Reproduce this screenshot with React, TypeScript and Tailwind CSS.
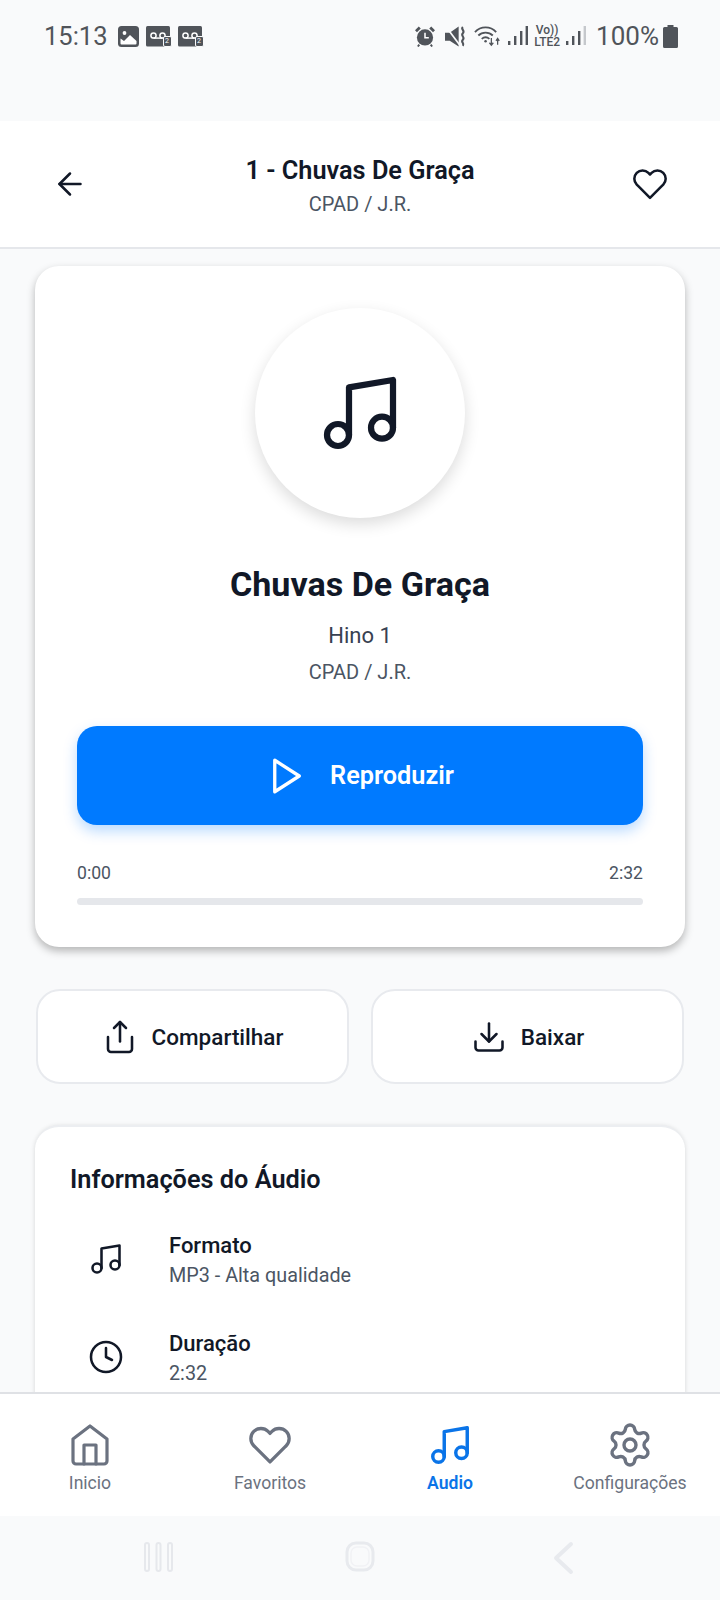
import React from "react";
import { ArrowLeft, Music, Share, Download, Clock, Settings } from "lucide-react";

const HEART =
  "M20.84 4.61a5.5 5.5 0 0 0-7.78 0L12 5.67l-1.06-1.06a5.5 5.5 0 0 0-7.78 7.78l1.06 1.06L12 21.23l7.78-7.78 1.06-1.06a5.5 5.5 0 0 0 0-7.78z";

function Heart({ size, color, sw }: { size: number; color: string; sw: number }) {
  return (
    <svg width={size} height={size} viewBox="0 0 24 24" fill="none" stroke={color} strokeWidth={sw} strokeLinecap="round" strokeLinejoin="round" className="block">
      <path d={HEART} />
    </svg>
  );
}

function Voicemail() {
  return (
    <span className="relative block w-[26px] h-[21px]">
      <svg width="24" height="21" viewBox="0 0 24 21" className="block">
        <rect width="24" height="20.5" rx="1.5" fill="#50545a" />
        <circle cx="7.5" cy="9.500" r="2.600" fill="none" stroke="#fff" strokeWidth="1.500" />
        <circle cx="16.500" cy="9.500" r="2.600" fill="none" stroke="#fff" strokeWidth="1.500" />
        <path d="M7.500 12.100h9" stroke="#fff" strokeWidth="1.500" />
      </svg>
      <span className="absolute right-0 bottom-0 w-[9px] h-[11px] bg-[#50545a] border border-[#f9fafb] rounded-[2px] text-white text-[7px] leading-[9px] text-center">
        2
      </span>
    </span>
  );
}

function Bars({ dim }: { dim?: boolean }) {
  return (
    <svg width="20" height="20" viewBox="0 0 20 20" className="block">
      <rect x="0" y="15" width="2.400" height="4" fill="#50545a" />
      <rect x="6" y="10" width="2.400" height="9" fill="#50545a" />
      <rect x="12" y="5" width="2.400" height="14" fill="#50545a" />
      <rect x="17.600" y="0" width="2.400" height="19" fill={dim ? "#c5c8cc" : "#50545a"} />
    </svg>
  );
}

function StatusBar() {
  return (
    <div className="h-[121px] bg-[#f9fafb] flex items-start justify-between pl-[44px] pr-[42px] pt-[21px] text-[#50545a]">
      <div className="flex items-center h-[30px]">
        <span className="text-[25.5px] leading-[30px] mr-[10px]">15:13</span>
        <svg width="21" height="21" viewBox="0 0 21 21" className="mr-[7px]">
          <rect width="21" height="21" rx="3.500" fill="#50545a" />
          <path d="M2.500 17.500v-5l3.500 2.500 6-6 6.500 6v2.500a1 1 0 0 1-1 1H3.500a1 1 0 0 1-1-1z" fill="#fff" />
          <circle cx="6.500" cy="7" r="1.900" fill="#fff" />
        </svg>
        <span className="mr-[6px]"><Voicemail /></span>
        <Voicemail />
      </div>
      <div className="flex items-center h-[30px]">
        <svg width="20" height="21" viewBox="0 0 21 22" className="mr-[10px]">
          <circle cx="10.500" cy="12" r="8.500" fill="#50545a" />
          <path d="M10.500 7v5.200h4" fill="none" stroke="#fff" strokeWidth="1.600" />
          <path d="M1 5.500 5 1.500M20 5.500l-4-4" stroke="#50545a" strokeWidth="3" />
          <path d="M4.500 19.500 3 21.500M16.500 19.500l1.500 2" stroke="#50545a" strokeWidth="2" />
        </svg>
        <svg width="21" height="21" viewBox="0 0 20 20" className="mr-[8px]">
          <path d="M0 6.500h4.500L13 .5v19l-8.500-5.500H0z" fill="#50545a" />
          <path d="M1.500 1.500 14 18" stroke="#f9fafb" strokeWidth="1.600" />
          <path d="M17 1c-2.500 2 2.500 3.500 0 6s2.500 3.500 0 6 2 3 0 6" fill="none" stroke="#50545a" strokeWidth="2" />
        </svg>
        <svg width="27" height="22" viewBox="0 0 28 22" className="mr-[7px]">
          <path d="M1 7c6-6.500 16-6.500 22 0M4.500 10.500c4-4 11-4 15 0M8 14c2.500-2.200 5.500-2.200 8 0" fill="none" stroke="#50545a" strokeWidth="1.900" />
          <circle cx="12" cy="16.500" r="1.300" fill="#50545a" />
          <path d="M18 13v7M16 18l2 2.500 2-2.500M24.500 20v-6M22.800 16l1.700-2.500 1.700 2.500" fill="none" stroke="#50545a" strokeWidth="1.300" />
        </svg>
        <span className="mr-[5px]"><Bars /></span>
        <span className="flex flex-col items-center text-[12px] leading-[12px] font-medium text-[#50545a] w-[28px] mr-[5px]">
          <span>Vo))</span>
          <span>LTE2</span>
        </span>
        <span className="mr-[10px]"><Bars dim /></span>
        <span className="text-[26px] leading-[30px] mr-[4px] text-[#50545a]">100%</span>
        <svg width="15" height="23" viewBox="0 0 15 23">
          <path d="M4.500 0h6v2h3a1.500 1.500 0 0 1 1.500 1.500V21.500a1.500 1.500 0 0 1-1.500 1.500h-12A1.500 1.500 0 0 1 0 21.500V3.500A1.500 1.500 0 0 1 1.500 2h3z" fill="#50545a" />
        </svg>
      </div>
    </div>
  );
}

function Header() {
  return (
    <div className="h-[128px] shrink-0 bg-white border-b-2 border-[#e5e7eb] flex items-center justify-between px-[48px] pb-[1px]">
      <span className="w-[44px] h-[44px] flex items-center justify-center">
        <ArrowLeft size={36} color="#111827" strokeWidth={1.700} />
      </span>
      <div className="flex flex-col items-center mt-[5px]">
        <span className="text-[25.3px] leading-[32px] font-semibold text-[#111827]">1 - Chuvas De Graça</span>
        <span className="text-[20px] leading-[28px] text-[#4b5563] mt-[3px]">CPAD / J.R.</span>
      </div>
      <span className="w-[44px] h-[44px] flex items-center justify-center">
        <Heart size={36} color="#111827" sw={1.700} />
      </span>
    </div>
  );
}

function PlayerCard() {
  return (
    <div className="-mx-[1px] bg-white rounded-[24px] h-[681px] shrink-0 px-[42px] pt-[42px] flex flex-col items-center shadow-[0_4px_8px_rgba(0,0,0,0.28)]">
      <div className="w-[210px] h-[210px] shrink-0 rounded-full bg-white flex items-center justify-center shadow-[0_6px_16px_rgba(0,0,0,0.14)]">
        <Music size={88} color="#111827" strokeWidth={1.700} />
      </div>
      <div className="mt-[46px] text-[34.1px] leading-[40px] font-bold text-[#111827]">Chuvas De Graça</div>
      <div className="mt-[18px] text-[22px] leading-[28px] text-[#374151]">Hino 1</div>
      <div className="mt-[8px] text-[20px] leading-[28px] text-[#4b5563]">CPAD / J.R.</div>
      <div className="mt-[40px] w-full h-[99px] shrink-0 rounded-[20px] bg-[#007aff] flex items-center justify-center gap-[22px] shadow-[0_6px_14px_rgba(0,122,255,0.28)]">
        <svg width="42" height="42" viewBox="0 0 24 24" fill="none" stroke="#ffffff" strokeWidth="1.900" strokeLinejoin="round" className="block">
          <polygon points="5 3 19 12 5 21 5 3" />
        </svg>
        <span className="text-[25.3px] leading-[32px] font-semibold text-white mt-[1px]">Reproduzir</span>
      </div>
      <div className="mt-[36px] w-full flex justify-between text-[17.6px] leading-[24px] text-[#4b5563]">
        <span>0:00</span>
        <span>2:32</span>
      </div>
      <div className="mt-[13px] w-full h-[7px] rounded-full bg-[#e5e7eb]" />
    </div>
  );
}

function ActionButton({ icon, label }: { icon: React.ReactNode; label: string }) {
  return (
    <div className="flex-1 h-[95px] bg-white rounded-[24px] border-2 border-[#e8eaee] flex items-center justify-center gap-[14px]">
      {icon}
      <span className="text-[22.5px] leading-[28px] font-medium text-[#111827]">{label}</span>
    </div>
  );
}

function InfoRow({ icon, label, value }: { icon: React.ReactNode; label: string; value: string }) {
  return (
    <div className="flex items-center h-[58px] shrink-0">
      <span className="w-[71px] -mt-[5px] flex justify-center shrink-0">{icon}</span>
      <div className="ml-[28px] flex flex-col">
        <span className="text-[22px] leading-[28px] font-medium text-[#111827]">{label}</span>
        <span className="text-[19.8px] leading-[28px] mt-[2px] text-[#4b5563]">{value}</span>
      </div>
    </div>
  );
}

function InfoCard() {
  return (
    <div className="-mx-[1px] mt-[41px] bg-white rounded-[24px] h-[400px] shrink-0 pl-[35px] pt-[37px] border-t-2 border-[#eceef1] shadow-[0_1px_5px_rgba(0,0,0,0.14)]">
      <div className="text-[25.3px] leading-[32px] font-semibold text-[#111827]">Informações do Áudio</div>
      <div className="mt-[36px] flex flex-col gap-[40px]">
        <InfoRow icon={<Music size={36} color="#111827" strokeWidth={1.700} />} label="Formato" value="MP3 - Alta qualidade" />
        <InfoRow icon={<Clock size={36} color="#111827" strokeWidth={1.700} />} label="Duração" value="2:32" />
      </div>
    </div>
  );
}

function NavItem({ icon, label, active }: { icon: React.ReactNode; label: string; active?: boolean }) {
  return (
    <div className="flex-1 flex flex-col items-center pt-[27px]">
      <span className="h-[48px] flex items-center justify-center">{icon}</span>
      <span className={active ? "mt-[2px] text-[17.6px] leading-[24px] font-semibold text-[#0a74e8]" : "mt-[2px] text-[17.6px] leading-[24px] text-[#6b7280]"}>
        {label}
      </span>
    </div>
  );
}

function HomeIcon() {
  return (
    <svg width="38" height="42" viewBox="0 0 38 42" fill="none" stroke="#6b7280" strokeWidth="3.200" strokeLinejoin="round" strokeLinecap="round" className="block">
      <path d="M19 2 2 15v22a3 3 0 0 0 3 3h28a3 3 0 0 0 3-3V15z" />
      <path d="M13 40V21h12v19" />
    </svg>
  );
}

function BottomNav() {
  return (
    <div className="h-[124px] shrink-0 bg-white border-t-2 border-[#dfe1e5] flex">
      <NavItem icon={<HomeIcon />} label="Inicio" />
      <NavItem icon={<Heart size={44} color="#6b7280" sw={1.800} />} label="Favoritos" />
      <NavItem icon={<Music size={46} color="#0a74e8" strokeWidth={1.800} />} label="Audio" active />
      <NavItem icon={<Settings size={48} color="#6b7280" strokeWidth={1.700} />} label="Configurações" />
    </div>
  );
}

function SystemNav() {
  return (
    <div className="h-[84px] shrink-0 bg-[#f9fafb] flex items-start pt-[25px] pl-[143px]">
      <svg width="30" height="32" viewBox="0 0 30 32" className="block">
        <g fill="none" stroke="#e6e8ec" strokeWidth="2">
          <rect x="2" y="2" width="4" height="28" rx="2" />
          <rect x="13.500" y="2" width="4" height="28" rx="2" />
          <rect x="25" y="2" width="4" height="28" rx="2" />
        </g>
      </svg>
      <svg width="30" height="32" viewBox="0 0 30 32" className="block ml-[172px]">
        <rect x="2" y="2" width="26" height="27" rx="9" fill="none" stroke="#e8eaee" strokeWidth="3" />
        <rect x="6" y="6" width="18" height="19" rx="6" fill="none" stroke="#f1f2f5" strokeWidth="1.500" />
      </svg>
      <svg width="24" height="34" viewBox="0 0 24 34" className="block ml-[176px]">
        <path d="M20 3 5 17l15 14" fill="none" stroke="#e8eaee" strokeWidth="4" strokeLinecap="round" strokeLinejoin="round" />
      </svg>
    </div>
  );
}

export default function App() {
  return (
    <div className="w-[720px] h-[1600px] flex flex-col overflow-hidden bg-[#f9fafb] font-['Roboto',sans-serif]">
      <StatusBar />
      <Header />
      <div className="flex-1 min-h-0 overflow-hidden px-[36px] pt-[17px] flex flex-col">
        <PlayerCard />
        <div className="mt-[42px] flex gap-[22px] shrink-0">
          <ActionButton icon={<Share size={36} color="#111827" strokeWidth={1.700} />} label="Compartilhar" />
          <ActionButton icon={<Download size={36} color="#111827" strokeWidth={1.700} />} label="Baixar" />
        </div>
        <InfoCard />
      </div>
      <BottomNav />
      <SystemNav />
    </div>
  );
}
